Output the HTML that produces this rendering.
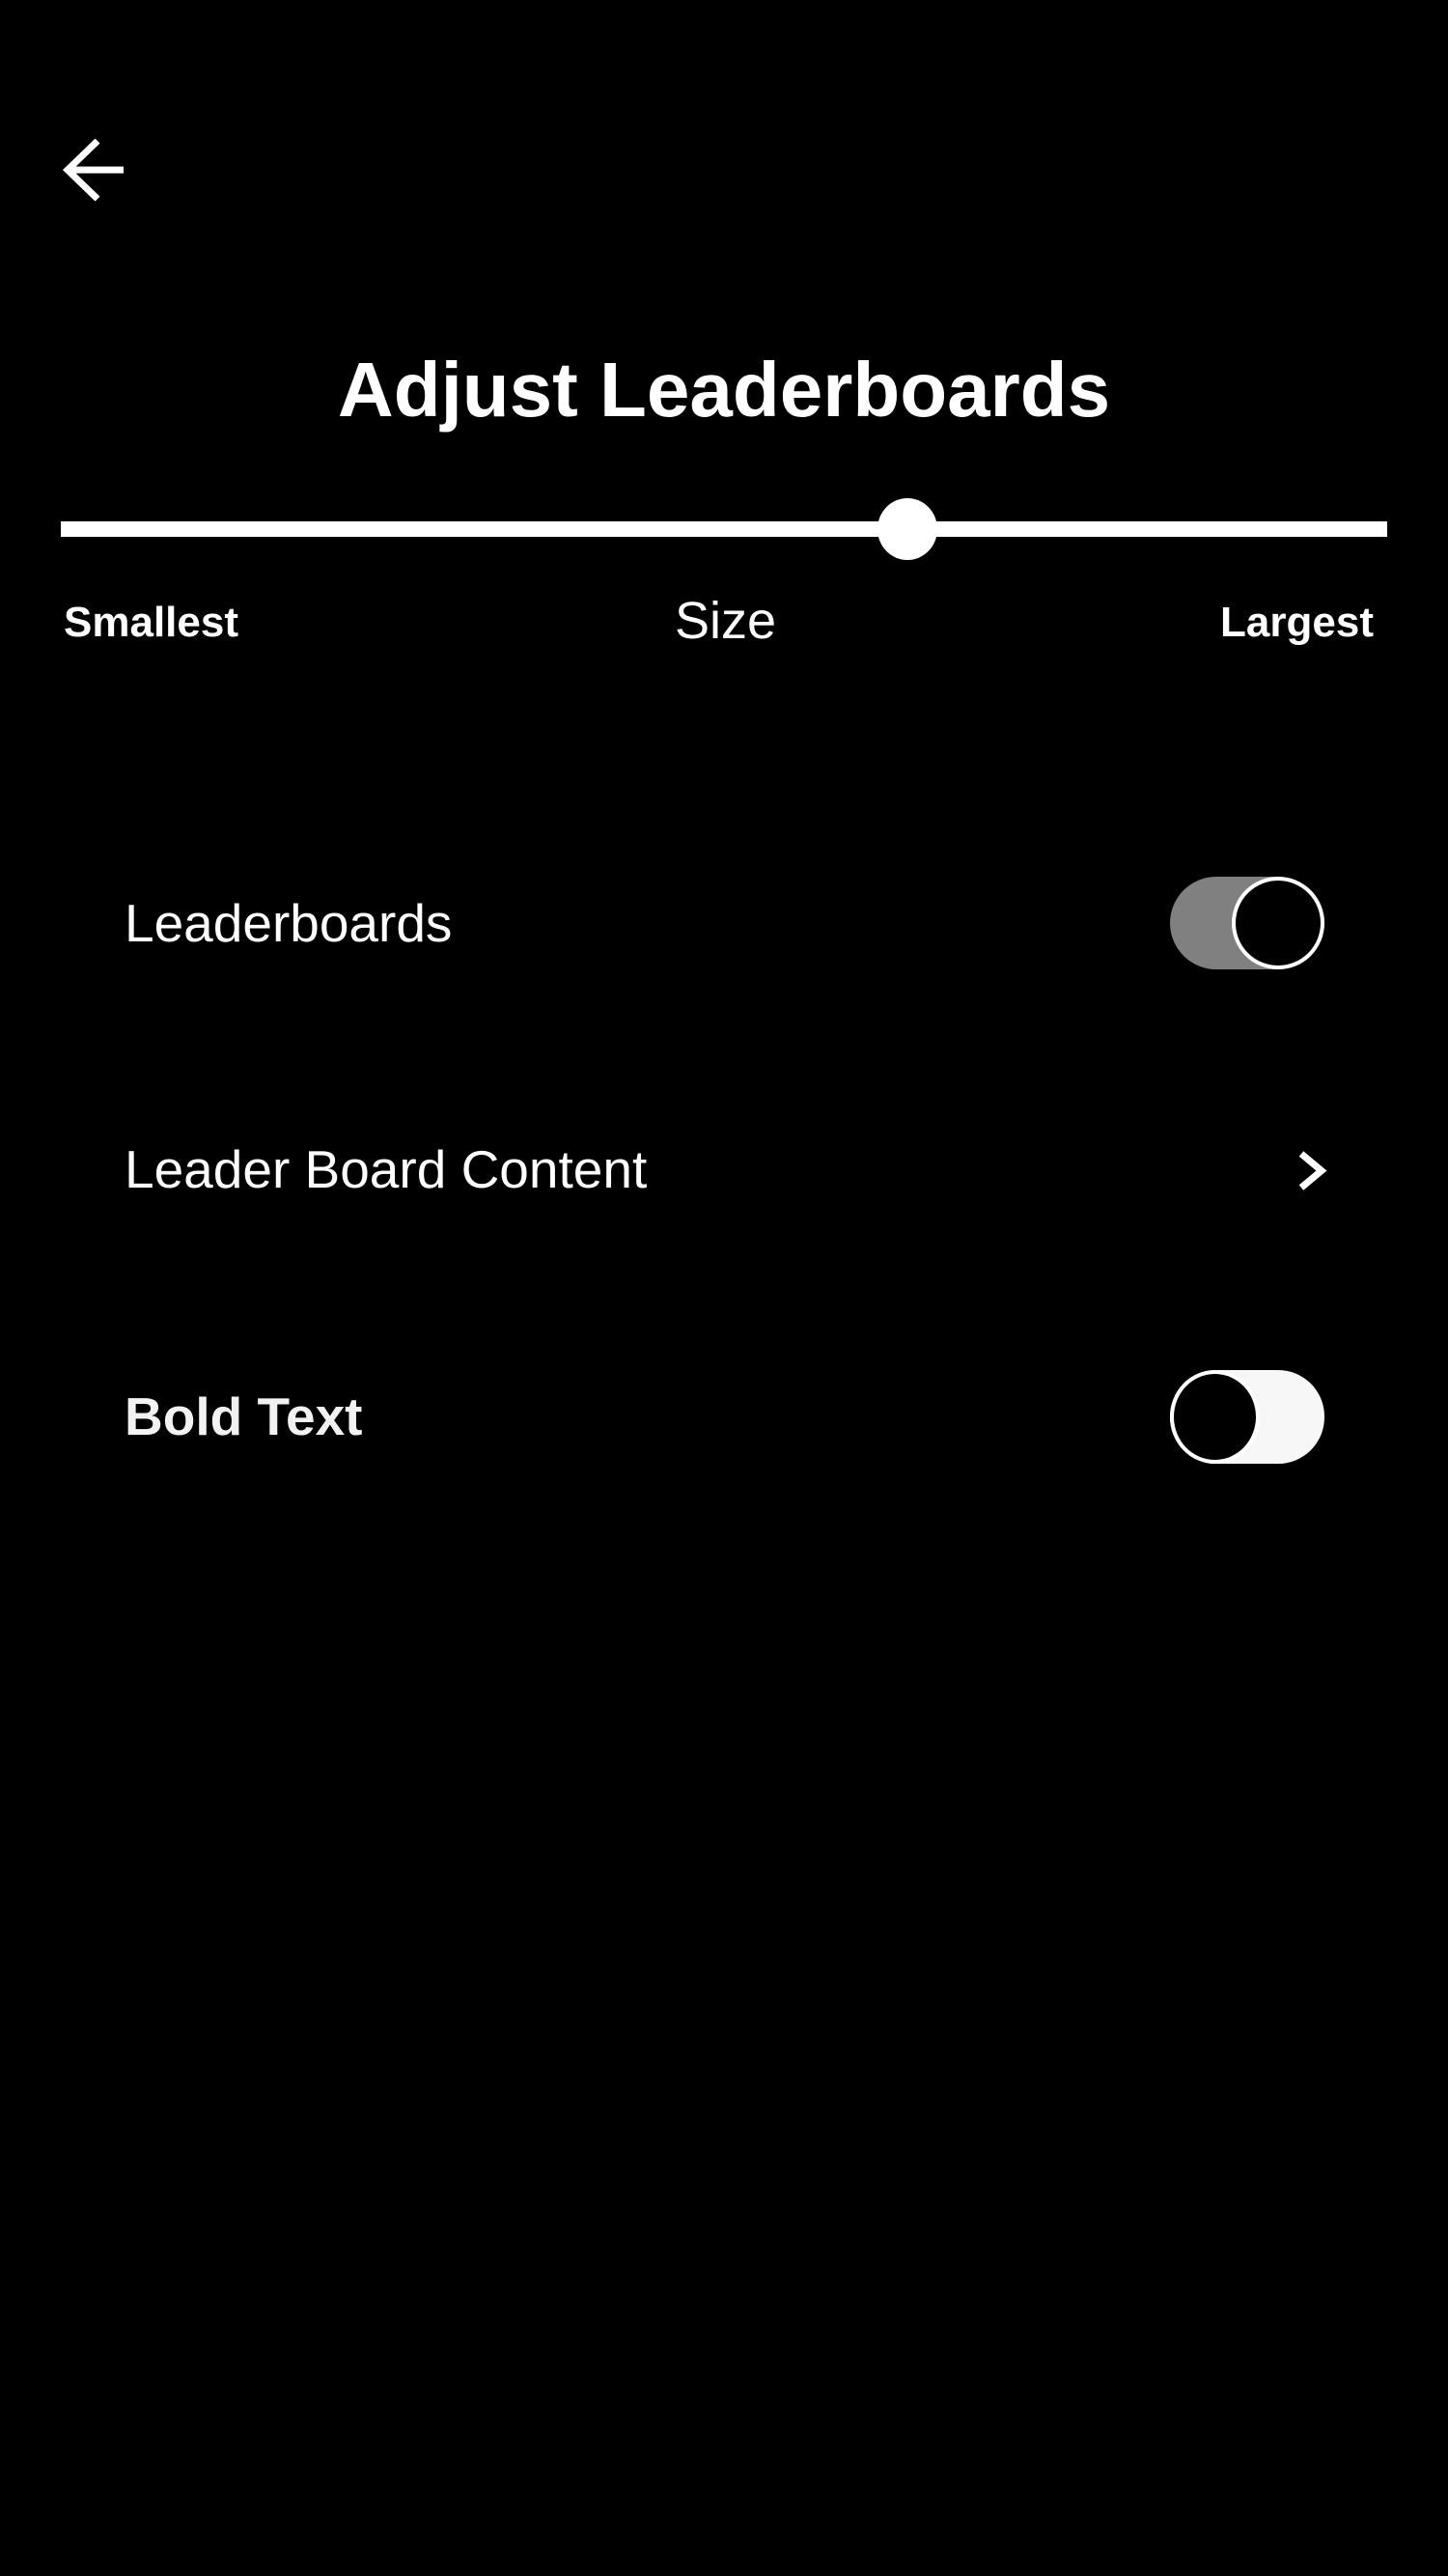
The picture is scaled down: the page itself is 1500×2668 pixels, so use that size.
<!DOCTYPE html>
<html><head><meta charset="utf-8"><style>
html,body{margin:0;padding:0;background:#000;}
body{width:1500px;height:2668px;position:relative;overflow:hidden;font-family:"Liberation Sans",Arial,sans-serif;color:#fff;}
.t{position:absolute;line-height:1;white-space:nowrap;}
</style></head><body>
<svg style="position:absolute;left:0;top:0" width="200" height="240">
<path d="M128 176 H70 M101 146 L70 176 L101 206" fill="none" stroke="#fff" stroke-width="7" stroke-linecap="butt" stroke-linejoin="miter"/>
</svg>
<div class="t" style="left:0;width:1500px;text-align:center;top:364px;font-size:80px;font-weight:bold;">Adjust Leaderboards</div>
<div style="position:absolute;left:63px;top:540px;width:1374px;height:16px;background:#fff;"></div>
<div style="position:absolute;left:909px;top:516px;width:62px;height:64px;border-radius:50%;background:#fff;"></div>
<div class="t" style="left:66px;top:623px;font-size:44px;font-weight:bold;">Smallest</div>
<div class="t" style="left:699px;top:616px;font-size:54px;">Size</div>
<div class="t" style="right:77px;top:623px;font-size:44px;font-weight:bold;">Largest</div>
<div class="t" style="left:129px;top:929px;font-size:55px;">Leaderboards</div>
<div style="position:absolute;left:1212px;top:908px;width:160px;height:96px;border-radius:48px;background:#808080;"></div>
<div style="position:absolute;left:1276px;top:908px;width:88px;height:88px;border-radius:50%;background:#000;border:4px solid #fff;"></div>
<div class="t" style="left:129px;top:1184px;font-size:55px;">Leader Board Content</div>
<svg style="position:absolute;left:1340px;top:1188px" width="40" height="50">
<path d="M8 7 L29 24.5 L8 42" fill="none" stroke="#fff" stroke-width="7"/>
</svg>
<div class="t" style="left:129px;top:1440px;font-size:55px;font-weight:bold;color:#f2f2f2;">Bold Text</div>
<div style="position:absolute;left:1212px;top:1419px;width:160px;height:97px;border-radius:48px;background:#f7f7f7;"></div>
<div style="position:absolute;left:1212px;top:1419px;width:85px;height:89px;border-radius:50%;background:#000;border:4px solid #fff;"></div>
</body></html>
